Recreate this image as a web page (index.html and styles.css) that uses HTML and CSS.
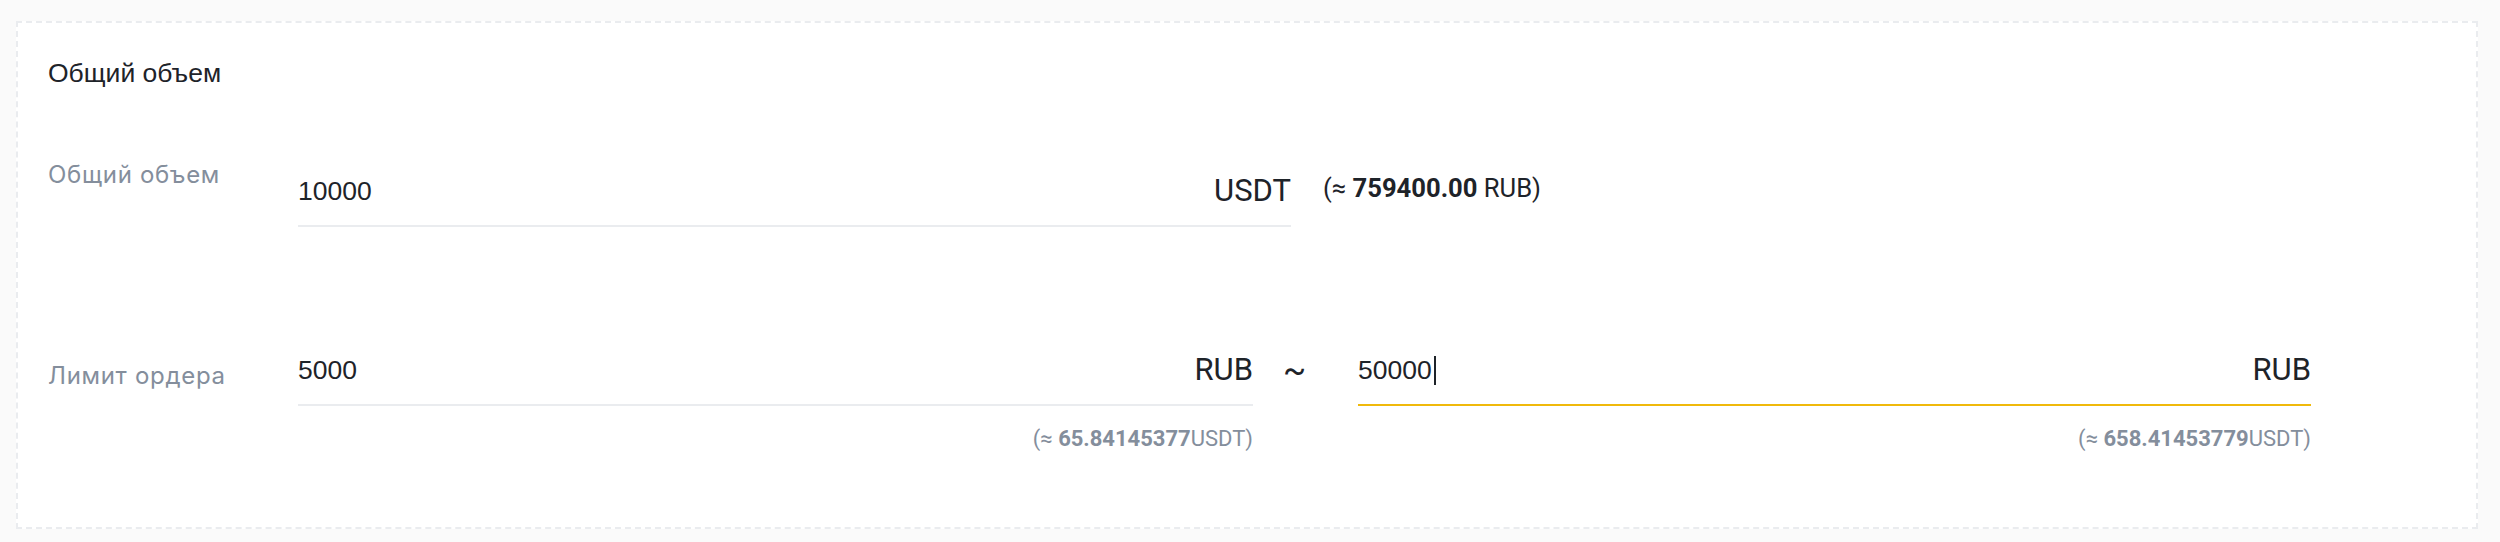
FILE: index.html
```html
<!DOCTYPE html>
<html lang="ru">
<head>
<meta charset="utf-8">
<title>Общий объем</title>
<link rel="stylesheet" href="styles.css">
</head>
<body>
<div class="card">
  <h2 class="title">Общий объем</h2>
  <div class="row row-total">
    <div class="label label-top">Общий объем</div>
    <div class="field field-wide">
      <span class="value">10000</span>
      <span class="unit">USDT</span>
    </div>
    <div class="approx">(≈ <b>759400.00</b> RUB)</div>
  </div>
  <div class="row row-limit">
    <div class="label label-mid">Лимит ордера</div>
    <div class="col col-min">
      <div class="field">
        <span class="value">5000</span>
        <span class="unit">RUB</span>
      </div>
      <div class="hint">(≈ <b>65.84145377</b>USDT)</div>
    </div>
    <div class="sep">~</div>
    <div class="col col-max">
      <div class="field field-active">
        <span class="value">50000<span class="caret"></span></span>
        <span class="unit">RUB</span>
      </div>
      <div class="hint">(≈ <b>658.41453779</b>USDT)</div>
    </div>
  </div>
</div>
</body>
</html>
```

FILE: styles.css
```css
html, body {
  margin: 0;
}
body {
  background: #fafafa;
  padding: 21px 22px 13px 16px;
}
.card {
  box-sizing: border-box;
  height: 508px;
  border: 2px dashed #eaecef;
  background: #ffffff;
  padding: 32px 0 0 30px;
}
.title {
  margin: 0;
  font: 400 26.5px/36px "Liberation Sans", Arial, sans-serif;
  color: #1e2329;
}
.row {
  display: flex;
  align-items: flex-start;
}
.row-total {
  margin-top: 66px;
}
.row-limit {
  margin-top: 109px;
}
.label {
  width: 250px;
  flex: none;
  font: 400 24px/28px "Inter", "Liberation Sans", sans-serif;
  letter-spacing: 0.7px;
  color: #848e9c;
}
.label-top {
  margin-top: 4px;
}
.label-mid {
  margin-top: 26px;
}
.field {
  display: flex;
  align-items: center;
  justify-content: space-between;
  height: 68px;
  border-bottom: 2px solid #eaecef;
}
.field-wide {
  width: 993px;
  flex: none;
}
.field-active {
  border-bottom-color: #f0b90b;
}
.value {
  display: flex;
  align-items: center;
  font: 400 26.5px/30px "Liberation Sans", Arial, sans-serif;
  color: #1e2329;
}
.caret {
  display: inline-block;
  width: 2px;
  height: 29px;
  margin-left: 2px;
  background: #1e2329;
}
.unit {
  font: 400 31px/34px "Roboto", "Liberation Sans", sans-serif;
  color: #1e2329;
}
.approx {
  margin: 16px 0 0 32px;
  font: 400 25.6px/30px "Roboto", "Liberation Sans", sans-serif;
  color: #1e2329;
}
.approx b,
.hint b {
  font-weight: 700;
}
.col {
  display: flex;
  flex-direction: column;
  flex: none;
}
.col-min {
  width: 955px;
}
.col-max {
  width: 953px;
}
.sep {
  flex: none;
  box-sizing: border-box;
  width: 105px;
  height: 68px;
  padding-left: 30px;
  display: flex;
  align-items: center;
  font: 400 34px/34px "Roboto", "Liberation Sans", sans-serif;
  color: #1e2329;
}
.hint {
  margin-top: 19px;
  text-align: right;
  font: 400 22px/28px "Roboto", "Liberation Sans", sans-serif;
  color: #848e9c;
}
```
